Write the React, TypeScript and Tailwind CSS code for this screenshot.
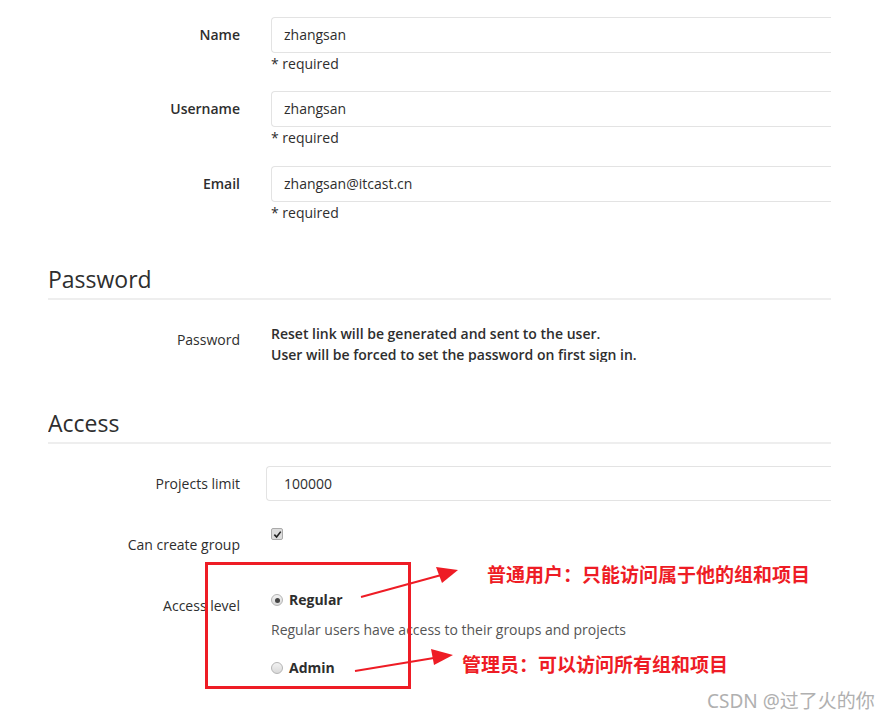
import React from "react";

const font = { fontFamily: '"Open Sans", "Noto Sans", sans-serif' };

function Field({ label, value, required = true, top }: { label: string; value: string; required?: boolean; top: string }) {
  return (
    <div className={`flex ${top}`}>
      <div className="w-[192px] shrink-0 text-right text-[14px] font-semibold leading-[36px] text-[#2e2e2e]">{label}</div>
      <div className="ml-[31px] flex-1">
        <div className="h-[36px] rounded-l-[4px] border border-r-0 border-[#e3e3e3] pl-[12px] text-[14px] leading-[34px] text-[#2e2e2e]">
          {value}
        </div>
        {required && <div className="text-[14px] leading-[22px] text-[#2e2e2e]">* required</div>}
      </div>
    </div>
  );
}

function Heading({ title, top }: { title: string; top: string }) {
  return (
    <div className={`${top} border-b-2 border-[#eeeeee] pb-[4px] text-[23px] leading-[30px] text-[#2e2e2e]`}>{title}</div>
  );
}

function Radio({ checked }: { checked?: boolean }) {
  return (
    <span className="flex h-[12px] w-[12px] items-center justify-center rounded-full border border-[#b5b5b5] bg-gradient-to-b from-[#f2f2f2] to-[#d9d9d9]">
      {checked && <span className="h-[5px] w-[5px] rounded-full bg-[#444]" />}
    </span>
  );
}

export default function App() {
  return (
    <div className="relative h-[719px] w-[893px] overflow-hidden bg-white" style={font}>
      <div className="ml-[48px] w-[783px] overflow-hidden pt-[17px]">
        <Field label="Name" value="zhangsan" top="" />
        <Field label="Username" value="zhangsan" top="mt-[16px]" />
        <Field label="Email" value="zhangsan@itcast.cn" top="mt-[17px]" />

        <Heading title="Password" top="mt-[40px]" />
        <div className="mt-[23px] flex">
          <div className="w-[192px] shrink-0 pt-[6px] text-right text-[14px] leading-[22px] text-[#2e2e2e]">Password</div>
          <div className="ml-[31px] h-[39px] flex-1 overflow-hidden text-[14px] font-semibold leading-[21px] text-[#2e2e2e]">
            <p>Reset link will be generated and sent to the user.</p>
            <p>User will be forced to set the password on first sign in.</p>
          </div>
        </div>

        <Heading title="Access" top="mt-[46px]" />
        <div className="mt-[22px] flex">
          <div className="w-[192px] shrink-0 text-right text-[14px] font-medium leading-[35px] text-[#2e2e2e]">Projects limit</div>
          <div className="ml-[26px] h-[35px] flex-1 rounded-l-[4px] border border-r-0 border-[#e3e3e3] pl-[17px] text-[14px] leading-[33px] text-[#2e2e2e]">
            100000
          </div>
        </div>

        <div className="mt-[27px] flex">
          <div className="w-[192px] shrink-0 pt-[6px] text-right text-[14px] font-medium leading-[22px] text-[#2e2e2e]">Can create group</div>
          <div className="ml-[31px] flex-1">
            <span className="flex h-[12px] w-[12px] items-center justify-center rounded-[2px] border border-[#aaa] bg-[#dcdcdc]">
              <svg viewBox="0 0 10 10" className="h-[9px] w-[9px]">
                <path d="M1.5 5.2 L4 7.8 L8.6 1.8" fill="none" stroke="#222" strokeWidth="1.8" />
              </svg>
            </span>
          </div>
        </div>

        <div className="mt-[33px] flex">
          <div className="w-[192px] shrink-0 pt-[6px] text-right text-[14px] font-medium leading-[22px] text-[#2e2e2e]">Access level</div>
          <div className="ml-[31px] flex-1">
            <div className="flex items-center gap-[6px] text-[14px] font-bold leading-[22px] text-[#2e2e2e]">
              <Radio checked />
              Regular
            </div>
            <div className="mt-[8px] text-[14px] leading-[22px] text-[#555]">Regular users have access to their groups and projects</div>
            <div className="mt-[16px] flex items-center gap-[6px] text-[14px] font-bold leading-[22px] text-[#2e2e2e]">
              <Radio />
              Admin
            </div>
          </div>
        </div>
      </div>

      {/* annotations */}
      <div className="absolute left-[205px] top-[562px] h-[127px] w-[206px] border-[3px] border-[#ee1c25]" />
      <svg className="absolute left-0 top-0" width="893" height="719">
        <line x1="361" y1="597" x2="445" y2="574" stroke="#ee1c25" strokeWidth="2" />
        <polygon points="458,570 436,567 442,583" fill="#ee1c25" />
        <line x1="355" y1="671" x2="440" y2="657" stroke="#ee1c25" strokeWidth="2" />
        <polygon points="453,655 431,649 434,665" fill="#ee1c25" />
      </svg>
      <div
        className="absolute left-[487px] top-[562px] text-[19px] font-bold leading-[24px] text-[#ee1c25]"
        style={{ fontFamily: '"Noto Sans CJK SC", sans-serif' }}
      >
        普通用户：只能访问属于他的组和项目
      </div>
      <div
        className="absolute left-[462px] top-[652px] text-[19px] font-bold leading-[24px] text-[#ee1c25]"
        style={{ fontFamily: '"Noto Sans CJK SC", sans-serif' }}
      >
        管理员：可以访问所有组和项目
      </div>
      <div
        className="absolute left-[707px] top-[688px] text-[19px] leading-[26px] text-[#b0b0b0]"
        style={{ fontFamily: '"Noto Sans", "Noto Sans CJK SC", sans-serif' }}
      >
        CSDN @过了火的你
      </div>
    </div>
  );
}
